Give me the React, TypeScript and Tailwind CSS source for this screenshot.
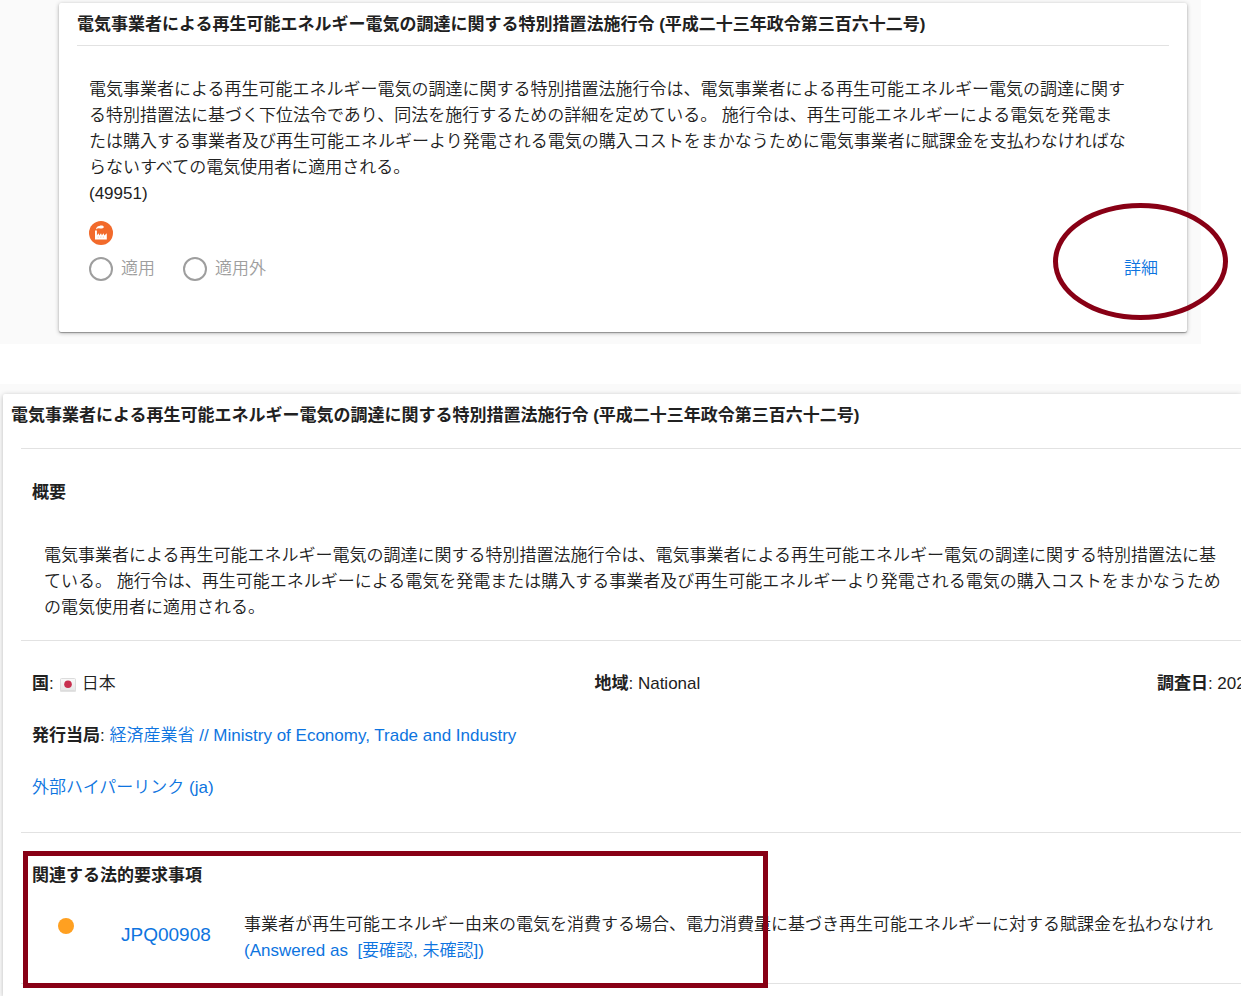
import React from 'react';

const TITLE = '電気事業者による再生可能エネルギー電気の調達に関する特別措置法施行令 (平成二十三年政令第三百六十二号)';

const SUMMARY_LINES = [
  '電気事業者による再生可能エネルギー電気の調達に関する特別措置法施行令は、電気事業者による再生可能エネルギー電気の調達に関す',
  'る特別措置法に基づく下位法令であり、同法を施行するための詳細を定めている。 施行令は、再生可能エネルギーによる電気を発電ま',
  'たは購入する事業者及び再生可能エネルギーより発電される電気の購入コストをまかなうために電気事業者に賦課金を支払わなければな',
  'らないすべての電気使用者に適用される。',
  '(49951)',
];

const DETAIL_LINES = [
  '電気事業者による再生可能エネルギー電気の調達に関する特別措置法施行令は、電気事業者による再生可能エネルギー電気の調達に関する特別措置法に基',
  'ている。 施行令は、再生可能エネルギーによる電気を発電または購入する事業者及び再生可能エネルギーより発電される電気の購入コストをまかなうため',
  'の電気使用者に適用される。',
];

const APPLICABILITY = [
  { value: 'applicable', label: '適用' },
  { value: 'not-applicable', label: '適用外' },
];

function FactoryIcon() {
  return (
    <svg viewBox="0 0 24 24" className="size-6" role="img" aria-label="Industry">
      <circle cx="12" cy="12" r="12" fill="#f26a2b" />
      <path d="M6 18.6V9.4h1.9v5.2l1.6-2.4.9 2.4 1.6-2.4.9 2.4 1.6-2.4.9 2.4 2.4-2.4v6.4z" fill="#fff" />
      <path d="M7 8.4c.2-2.2 1.6-3.6 3.4-3.5 1.4-.8 4.2-.4 4.4 1 .1 1.4-2.6 1.8-4 1.6-1.3-.3-2.5-.1-3.8.9z" fill="#fff" />
      <path d="M8.6 16.2h1.2m1.4 0h1.2m1.4 0h1.2" stroke="#f26a2b" strokeWidth="1.2" opacity="0.3" />
    </svg>
  );
}

function JapanFlag() {
  return (
    <svg viewBox="0 0 16 16" className="size-4" role="img" aria-label="Japan">
      <defs>
        <linearGradient id="flag" x1="0" y1="0" x2="0" y2="1">
          <stop offset="0" stopColor="#fafafa" />
          <stop offset="1" stopColor="#e6e6e6" />
        </linearGradient>
      </defs>
      <rect x="0" y="3" width="16" height="13" rx="1" fill="#cfcfcf" opacity="0.6" />
      <rect x="0.5" y="2.5" width="15" height="12" rx="1" fill="url(#flag)" stroke="#dcdcdc" />
      <circle cx="8" cy="8.3" r="3.8" fill="#c8304f" />
    </svg>
  );
}

function SummaryCard() {
  return (
    <section className="mr-[53px] bg-[#fafafa] pt-[3px] pr-[14px] pb-3 pl-[59px]">
      <article className="relative rounded-xs bg-white px-[18px] pt-[9px] pb-[50px] shadow-[0_1px_4px_rgba(0,0,0,0.3),0_1px_1px_rgba(0,0,0,0.3)]">
        <h2 className="border-b border-[#e2e2e2] pb-[7px] font-bold whitespace-nowrap">{TITLE}</h2>

        <div className="pt-[31px] pr-[11px] pl-3">
          <p className="whitespace-nowrap">
            {SUMMARY_LINES.map((line) => (
              <span key={line} className="block">{line}</span>
            ))}
          </p>

          <div className="mt-[14px]">
            <FactoryIcon />
          </div>

          <div className="mt-[11px] flex items-center justify-between">
            <div className="flex gap-7 text-[#9e9e9e]">
              {APPLICABILITY.map((option) => (
                <label key={option.value} className="flex items-center gap-2">
                  <input
                    type="radio"
                    name="applicability"
                    value={option.value}
                    className="size-6 appearance-none rounded-full border-2 border-[#9e9e9e] bg-white"
                  />
                  {option.label}
                </label>
              ))}
            </div>
            <a href="#detail" className="text-[#0d74e0]">詳細</a>
          </div>
        </div>

        {/* Highlight around the detail link */}
        <div className="pointer-events-none absolute top-[200px] -right-[41px] h-[117px] w-[175px] rounded-[50%] border-5 border-[#880015]" />
      </article>
    </section>
  );
}

function DetailCard() {
  return (
    <section id="detail" className="mt-10 mr-[13px] overflow-hidden bg-[#fafafa] pt-[10px] pl-[3px]">
      <article className="relative rounded-tl-xs bg-white pb-3 whitespace-nowrap shadow-[0_1px_5px_rgba(0,0,0,0.25)]">
        <h2 className="px-2 pt-[9px] font-bold">{TITLE}</h2>

        <div className="pl-[18px]">
          <div className="mt-[19px] border-y border-[#e2e2e2] pt-[31px] pb-[19px] pl-[11px]">
            <h3 className="font-bold">概要</h3>
            <p className="mt-[37px] pl-3">
              {DETAIL_LINES.map((line) => (
                <span key={line} className="block">{line}</span>
              ))}
            </p>
          </div>

          <div className="flex flex-col gap-[26px] border-b border-[#e2e2e2] pt-[30px] pb-[31px] pl-[11px]">
            <dl className="grid grid-cols-[562fr_562fr_84fr]">
              <div className="flex min-w-0 items-center">
                <dt className="font-bold">国</dt>
                <dd className="flex items-center">
                  <span className="mr-[6px]">:</span>
                  <JapanFlag />
                  <span className="ml-[6px]">日本</span>
                </dd>
              </div>
              <div className="flex min-w-0">
                <dt className="font-bold">地域</dt>
                <dd>: National</dd>
              </div>
              <div className="flex min-w-0 overflow-hidden">
                <dt className="font-bold">調査日</dt>
                <dd>: 202</dd>
              </div>
            </dl>
            <p>
              <b className="font-bold">発行当局</b>:{' '}
              <a href="#authority" className="text-[#0d74e0]">経済産業省 // Ministry of Economy, Trade and Industry</a>
            </p>
            <p>
              <a href="#external" className="text-[#0d74e0]">外部ハイパーリンク (ja)</a>
            </p>
          </div>

          <h3 className="pt-[30px] pl-[11px] font-bold">関連する法的要求事項</h3>
          <table className="mt-[13px] w-full table-fixed border-b border-[#e2e2e2]">
            <colgroup>
              <col className="w-[100px]" />
              <col className="w-[123px]" />
              <col />
            </colgroup>
            <tbody>
              <tr>
                <td className="py-[10px] pl-[37px] align-top">
                  <span className="mt-[6px] block size-4 rounded-full bg-[#ffa021]" />
                </td>
                <td className="pb-4 text-[19px]">
                  <a href="#JPQ00908" className="text-[#0d74e0]">JPQ00908</a>
                </td>
                <td className="pt-[10px] pb-[19px]">
                  事業者が再生可能エネルギー由来の電気を消費する場合、電力消費量に基づき再生可能エネルギーに対する賦課金を払わなけれ
                  <br />
                  <a href="#answer" className="text-[#0d74e0]">(Answered as &nbsp;[要確認, 未確認])</a>
                </td>
              </tr>
            </tbody>
          </table>
        </div>

        {/* Highlight around the related requirements */}
        <div className="pointer-events-none absolute top-[457px] left-5 h-[137px] w-[745px] border-5 border-[#880015]" />
      </article>
    </section>
  );
}

export default function App() {
  return (
    <main
      lang="ja"
      className="min-h-screen overflow-hidden bg-white font-['Liberation_Sans','Noto_Sans_CJK_JP',sans-serif] text-[17px] leading-[26px] font-[350] text-[#212121]"
    >
      <SummaryCard />
      <DetailCard />
    </main>
  );
}
